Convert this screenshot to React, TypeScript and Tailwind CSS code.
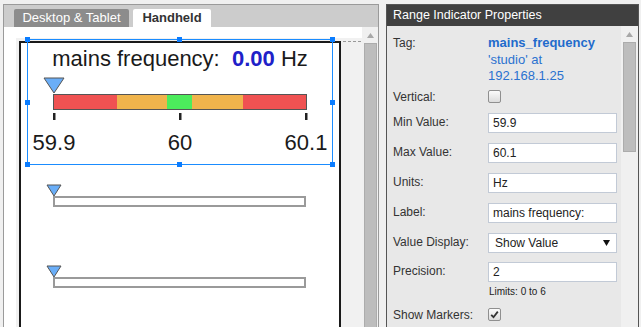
import React from "react";

const font = { fontFamily: '"Liberation Sans", Arial, sans-serif' };

function Handle({ cls }: { cls: string }) {
  return <div className={`absolute w-[5px] h-[5px] bg-[#0a7cff] ${cls}`} />;
}

function EmptyIndicator({ mt }: { mt: string }) {
  return (
    <svg width="318" height="30" className={`block ${mt}`}>
      <rect x="33" y="17" width="251" height="9" fill="#fff" stroke="#9a9a9a" strokeWidth="2" />
      <polygon points="26,5 40,5 33,16" fill="#6aaef8" stroke="#555" strokeWidth="1" />
    </svg>
  );
}

function Checkbox({ checked }: { checked?: boolean }) {
  return (
    <div className="w-[13px] h-[13px] rounded-[2px] border border-[#8f8f8f] bg-gradient-to-b from-[#fbfbfb] to-[#dcdcdc] flex items-center justify-center">
      {checked && (
        <svg width="9" height="9" viewBox="0 0 9 9">
          <path d="M1.2 4.8 L3.5 7.2 L7.8 1.6" fill="none" stroke="#333" strokeWidth="1.8" />
        </svg>
      )}
    </div>
  );
}

function InputRow({ label, value, mt }: { label: string; value: string; mt: string }) {
  return (
    <div className={`flex items-start h-[20px] ${mt}`}>
      <div className="w-[95px] text-[12px] leading-[16px] pt-[1px] text-[#333]">{label}</div>
      <div className="w-[129px] h-[20px] border border-[#c2cad6] bg-white pl-[4px] text-[12px] leading-[18px] text-[#222]">
        {value}
      </div>
    </div>
  );
}

export default function App() {
  return (
    <div className="w-[641px] h-[327px] overflow-hidden bg-[#f0f0f0] flex pt-[4px] pl-[3px] gap-[7px]" style={font}>
      {/* Left panel */}
      <div className="w-[376px] h-[340px] border border-[#9a9a9a] bg-white flex flex-col shrink-0">
        <div className="h-[23px] bg-[#cccccc] flex items-end pl-[10px] gap-[4px] pt-[4px]">
          <div className="w-[115px] h-[18px] bg-[#8c8c8c] rounded-t-[2px] text-white text-[13px] leading-[18px] text-center">
            Desktop &amp; Tablet
          </div>
          <div className="w-[78px] h-[18px] bg-white rounded-t-[2px] text-[#333] font-bold text-[13px] leading-[18px] text-center">
            Handheld
          </div>
        </div>
        <div className="flex flex-1">
          <div className="flex-1 pl-[12px] pt-[11px] flex">
            <div className="relative flex-1 bg-[#f1f1f1]">
              <div className="ml-[3px] mt-[3px] w-[322px] h-[400px] border-2 border-[#1a1a1a] bg-white">
                <div className="mt-[3px] h-[25px] text-center text-[22px] leading-[25px] text-[#1a1a1a] whitespace-pre">
                  mains frequency:{"  "}
                  <span className="font-bold text-[#2020c8]">0.00</span> Hz
                </div>
                <svg width="318" height="46" className="block mt-[5px]">
                  <rect x="33" y="19" width="63" height="14" fill="#f05252" />
                  <rect x="96" y="19" width="50" height="14" fill="#f0b44c" />
                  <rect x="146" y="19" width="25" height="14" fill="#4cec5c" />
                  <rect x="171" y="19" width="51" height="14" fill="#f0b44c" />
                  <rect x="222" y="19" width="63" height="14" fill="#f05252" />
                  <rect x="32.5" y="18.5" width="253" height="15" fill="none" stroke="#555" strokeWidth="1" />
                  <rect x="32" y="37" width="2.5" height="7" fill="#222" />
                  <rect x="158" y="37" width="2.5" height="7" fill="#222" />
                  <rect x="284" y="37" width="2.5" height="7" fill="#222" />
                  <polygon points="23,2 43,2 33,17" fill="#6aaef8" stroke="#555" strokeWidth="1" />
                </svg>
                <div className="mt-[8px] h-[25px] px-[3px] flex justify-between text-[22px] leading-[25px] text-[#1a1a1a]">
                  <div className="w-[60px] text-center">59.9</div>
                  <div className="w-[60px] text-center">60</div>
                  <div className="w-[60px] text-center">60.1</div>
                </div>
                <EmptyIndicator mt="mt-[25px]" />
                <EmptyIndicator mt="mt-[51px]" />
              </div>
              {/* dashed guide */}
              <div className="absolute left-[327px] top-[3px] w-[18px] border-t border-dashed border-[#999]" />
              {/* selection overlay */}
              <div className="absolute left-[11px] top-[1px] w-[306px] h-[126px] border border-[#1a8cff]">
                <Handle cls="-left-[3px] -top-[3px]" />
                <Handle cls="left-[149px] -top-[3px]" />
                <Handle cls="-right-[3px] -top-[3px]" />
                <Handle cls="-left-[3px] top-[60px]" />
                <Handle cls="-right-[3px] top-[60px]" />
                <Handle cls="-left-[3px] -bottom-[3px]" />
                <Handle cls="left-[149px] -bottom-[3px]" />
                <Handle cls="-right-[3px] -bottom-[3px]" />
              </div>
            </div>
          </div>
          <div className="w-[16px] bg-[#f0f0f0] flex flex-col items-center">
            <svg width="7" height="5" className="mt-[6px]">
              <polygon points="0,5 7,5 3.5,0" fill="#a8a8a8" />
            </svg>
            <div className="mt-[5px] w-[13px] flex-1 bg-[#bdbdbd] border border-[#acacac]" />
          </div>
        </div>
      </div>

      {/* Right panel */}
      <div className="w-[253px] h-[340px] border border-[#555] bg-[#e8e8e8] flex flex-col shrink-0">
        <div className="h-[21px] bg-[#404040] text-white text-[12.5px] leading-[21px] pl-[6px]">
          Range Indicator Properties
        </div>
        <div className="flex flex-1">
          <div className="flex-1 pl-[6px] pt-[9px] flex flex-col">
            <div className="flex items-start">
              <div className="w-[95px] text-[12px] leading-[16.5px] text-[#333]">Tag:</div>
              <div className="text-[13px] leading-[16.5px] text-[#2a72d0]">
                <div className="font-bold text-[#1f6bcc]">mains_frequency</div>
                <div>'studio' at</div>
                <div>192.168.1.25</div>
              </div>
            </div>
            <div className="flex items-center h-[16px] mt-[4px]">
              <div className="w-[95px] text-[12px] leading-[16px] text-[#333]">Vertical:</div>
              <Checkbox />
            </div>
            <InputRow label="Min Value:" value="59.9" mt="mt-[8px]" />
            <InputRow label="Max Value:" value="60.1" mt="mt-[10px]" />
            <InputRow label="Units:" value="Hz" mt="mt-[10px]" />
            <InputRow label="Label:" value="mains frequency:" mt="mt-[10px]" />
            <div className="flex items-start h-[20px] mt-[10px]">
              <div className="w-[95px] text-[12px] leading-[16px] pt-[1px] text-[#333]">Value Display:</div>
              <div className="w-[129px] h-[20px] border border-[#c2cad6] bg-white pl-[6px] pr-[6px] flex items-center justify-between text-[12px] text-[#222]">
                <span>Show Value</span>
                <svg width="7" height="6">
                  <polygon points="0,0 7,0 3.5,6" fill="#111" />
                </svg>
              </div>
            </div>
            <InputRow label="Precision:" value="2" mt="mt-[9px]" />
            <div className="ml-[96px] mt-[4px] text-[10px] leading-[12px] text-[#222]">Limits: 0 to 6</div>
            <div className="flex items-center h-[16px] mt-[9px]">
              <div className="w-[95px] text-[12px] leading-[16px] text-[#333]">Show Markers:</div>
              <Checkbox checked />
            </div>
          </div>
          <div className="w-[17px] bg-[#f0f0f0] flex flex-col items-center">
            <svg width="7" height="5" className="mt-[6px]">
              <polygon points="0,5 7,5 3.5,0" fill="#a8a8a8" />
            </svg>
            <div className="mt-[5px] w-[13px] h-[110px] bg-[#bdbdbd] border border-[#acacac]" />
          </div>
        </div>
      </div>
    </div>
  );
}
